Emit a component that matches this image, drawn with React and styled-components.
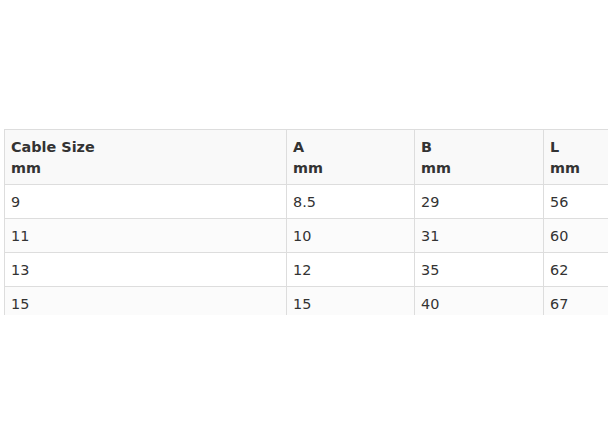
import React from "react";
import styled, { createGlobalStyle } from "styled-components";

const Global = createGlobalStyle`
  html, body { margin: 0; padding: 0; background: #fff; }
  body { font-family: "DejaVu Sans", Verdana, sans-serif; }
`;

const Page = styled.div`
  padding: 129px 0 0 4px;
`;

const Clip = styled.div`
  width: 604px;
  height: 186px;
  overflow: hidden;
`;

const Table = styled.table`
  border-collapse: collapse;
  table-layout: fixed;
  width: 800px;
  font-size: 14.4px;
  line-height: 21px;
  color: #333;
`;

const Col = styled.col`
  width: ${(p) => p.$w}px;
`;

const Th = styled.th`
  background: #f9f9f9;
  border: 1px solid #ddd;
  padding: 7px 6px 5px;
  text-align: left;
  font-weight: bold;
  vertical-align: top;
`;

const Td = styled.td`
  border: 1px solid #ddd;
  padding: 7px 6px 5px;
  text-align: left;
  vertical-align: top;
  background: ${(p) => (p.$alt ? "#fbfbfb" : "#fff")};
`;

const widths = [282, 128, 129, 261];

const headers = [
  ["Cable Size", "mm"],
  ["A", "mm"],
  ["B", "mm"],
  ["L", "mm"],
];

const rows = [
  ["9", "8.5", "29", "56"],
  ["11", "10", "31", "60"],
  ["13", "12", "35", "62"],
  ["15", "15", "40", "67"],
];

export default function App() {
  return (
    <>
      <Global />
      <Page>
        <Clip>
          <Table>
            <colgroup>
              {widths.map((w, i) => (
                <Col key={i} $w={w} />
              ))}
            </colgroup>
            <thead>
              <tr>
                {headers.map((h) => (
                  <Th key={h[0]}>
                    {h[0]}
                    <br />
                    {h[1]}
                  </Th>
                ))}
              </tr>
            </thead>
            <tbody>
              {rows.map((r, i) => (
                <tr key={i}>
                  {r.map((c, j) => (
                    <Td key={j} $alt={i % 2 === 1}>{c}</Td>
                  ))}
                </tr>
              ))}
            </tbody>
          </Table>
        </Clip>
      </Page>
    </>
  );
}
